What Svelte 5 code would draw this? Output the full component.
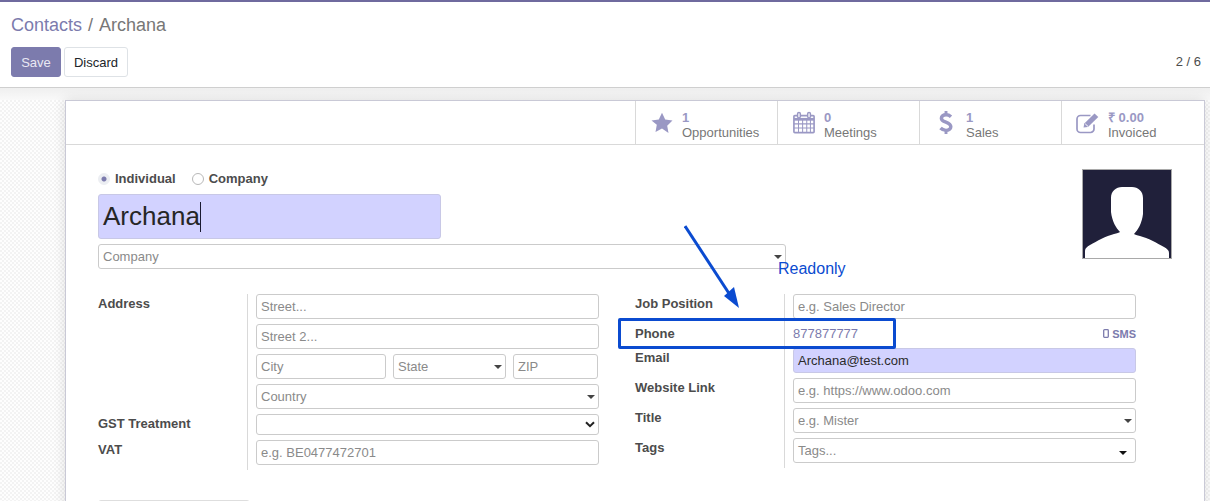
<script>
  const stats = [
    { id: 'star', value: '1', label: 'Opportunities' },
    { id: 'cal', value: '0', label: 'Meetings' },
    { id: 'dollar', value: '1', label: 'Sales' },
    { id: 'edit', value: '₹ 0.00', label: 'Invoiced' }
  ];
</script>

{#snippet field(text, kind = '')}
  <div class="field {kind}">
    <span>{text}</span>
    {#if kind.includes('drop')}<i class="caret"></i>{/if}
  </div>
{/snippet}

<div class="page">
  <header class="panel">
    <nav class="crumbs"><span class="link">Contacts</span><span class="sep">/</span><span>Archana</span></nav>
    <div class="actions">
      <div class="buttons">
        <button class="btn primary">Save</button>
        <button class="btn">Discard</button>
      </div>
      <div class="pager">2 / 6</div>
    </div>
  </header>

  <main class="canvas">
    <section class="sheet">
      <div class="statbar">
        {#each stats as s}
          <div class="stat">
            <div class="icon">
              {#if s.id === 'star'}
                <svg width="22" height="22" viewBox="0 0 22 22"><path d="M11 .8l3.2 6.8 7.3 1-5.3 5.1 1.3 7.4L11 16.6l-6.5 3.5 1.3-7.4L.5 8.6l7.3-1z" fill="#9a98c4"/></svg>
              {:else if s.id === 'cal'}
                <svg width="22" height="23" viewBox="0 0 24 24" fill="none" stroke="#9a98c4"><path d="M2 4.500h20a1 1 0 0 1 1 1V22a1 1 0 0 1-1 1H2a1 1 0 0 1-1-1V5.500a1 1 0 0 1 1-1z" stroke-width="1.800"/><path d="M1 8.500h22" stroke-width="3"/><path d="M1 13.500h22M1 18h22M6 9v14M10.500 9v14M15 9v14M19 9v14" stroke-width="1.100"/><rect x="5" y="1" width="3" height="6" rx="1.500" fill="#fff" stroke-width="1.600"/><rect x="16" y="1" width="3" height="6" rx="1.500" fill="#fff" stroke-width="1.600"/></svg>
              {:else if s.id === 'dollar'}
                <svg width="14" height="25" viewBox="0 0 14 26" fill="none" stroke="#9a98c4"><path d="M12.200 7C10.500 5.500 8.800 5 7 5c-2.800 0-4.800 1.400-4.800 3.500C2.200 13.500 12 11.800 12 17.500c0 2.300-2.200 3.700-5 3.700-2 0-4-.7-5.700-2.400" stroke-width="3.600"/><path d="M7 1v4M7 21v4" stroke-width="3"/></svg>
              {:else}
                <svg width="24" height="22" viewBox="0 0 24 22" fill="none" stroke="#9a98c4"><path d="M18 12.500V17a3.500 3.500 0 0 1-3.500 3.500H4.500A3.500 3.500 0 0 1 1 17V7a3.500 3.500 0 0 1 3.500-3.500h10" stroke-width="1.700"/><path d="M7.500 15.500l.8-4L18.500 1.500l3.800 3.500L12 15z" fill="#9a98c4" stroke="none"/><path d="M9.200 11.800l3 2.800" stroke="#fff"/></svg>
              {/if}
            </div>
            <div class="stat-text"><b>{s.value}</b><span>{s.label}</span></div>
          </div>
        {/each}
      </div>

      <div class="body">
        <div class="top">
          <div class="title">
            <div class="radios">
              <label class="radio"><i class="dot on"></i>Individual</label>
              <label class="radio"><i class="dot"></i>Company</label>
            </div>
            <div class="name"><span>Archana</span><i class="cursor"></i></div>
            {@render field('Company', 'drop')}
          </div>
          <div class="avatar">
            <svg width="88" height="88" viewBox="0 0 88 88">
              <rect width="88" height="88" fill="#20203a"/>
              <path d="M2 88v-7c0-3 2-4 5-6 7-4 16-9 24-11 3-1 5-1 6-2-4-4-8-11-9-20V28c0-7 5-11 11-11h10c6 0 11 4 11 11v16c-1 9-5 16-9 20 1 1 3 1 6 2 8 2 17 7 24 11 3 2 5 3 5 6V88z" fill="#fff"/>
            </svg>
          </div>
        </div>

        <div class="groups">
          <div class="group">
            <div class="lab">Address</div>
            <div class="val stack">
              {@render field('Street...')}
              {@render field('Street 2...')}
              <div class="city">
                <div class="c1">{@render field('City')}</div>
                <div class="c2">{@render field('State', 'drop')}</div>
                <div class="c3">{@render field('ZIP')}</div>
              </div>
              {@render field('Country', 'drop')}
            </div>
            <div class="lab">GST Treatment</div>
            <div class="val">
              <div class="field native">
                <svg class="chev" width="10" height="7" viewBox="0 0 10 7" fill="none" stroke="#222" stroke-width="2"><path d="M1 1.200l4 4 4-4"/></svg>
              </div>
            </div>
            <div class="lab">VAT</div>
            <div class="val">{@render field('e.g. BE0477472701')}</div>
          </div>

          <div class="group">
            <div class="lab">Job Position</div>
            <div class="val">{@render field('e.g. Sales Director')}</div>
            <div class="lab">Phone</div>
            <div class="val phone">
              <span class="num">877877777</span>
              <span class="sms">
                <svg width="6" height="9" viewBox="0 0 6 9" fill="none" stroke="#7c7bad" stroke-width="1.300"><rect x=".7" y=".7" width="4.600" height="7.600" rx=".8"/></svg>SMS
              </span>
            </div>
            <div class="lab">Email</div>
            <div class="val">{@render field('Archana@test.com', 'req')}</div>
            <div class="lab">Website Link</div>
            <div class="val">{@render field('e.g. https://www.odoo.com')}</div>
            <div class="lab">Title</div>
            <div class="val">{@render field('e.g. Mister', 'drop')}</div>
            <div class="lab">Tags</div>
            <div class="val">{@render field('Tags...', 'drop tags')}</div>
          </div>
        </div>

        <div class="notebook"></div>
      </div>
    </section>
  </main>

  <div class="note-box"></div>
  <div class="note-text">Readonly</div>
  <svg class="note-arrow" width="70" height="90" viewBox="0 0 70 90">
    <path d="M1 1L48 73" stroke="#0b4bd0" stroke-width="3" fill="none"/>
    <path d="M40 71L55 83 50 62z" fill="#0b4bd0"/>
  </svg>
</div>

<style>
  :global(body) {
    margin: 0;
    background: #fff;
  }
  .page {
    position: relative;
    width: 1210px;
    height: 501px;
    overflow: hidden;
    font-family: "Liberation Sans", Arial, sans-serif;
    font-size: 13px;
    color: #4c4c4c;
    border-top: 2px solid #6f6a9e;
    box-sizing: border-box;
    display: flex;
    flex-direction: column;
  }
  .panel {
    height: 86px;
    box-sizing: border-box;
    padding: 13px 9px 0 11px;
    border-bottom: 1px solid #cfcfcf;
    background: #fff;
    flex: none;
  }
  .crumbs {
    font-size: 18px;
    line-height: 21px;
    color: #777;
    display: flex;
  }
  .crumbs .link { color: #7c7bad; }
  .crumbs .sep { margin: 0 6px; }
  .actions {
    margin-top: 11px;
    display: flex;
    justify-content: space-between;
  }
  .buttons { display: flex; gap: 3px; }
  .btn {
    width: 64px;
    height: 30px;
    padding: 0;
    font: 13px "Liberation Sans", Arial, sans-serif;
    color: #212529;
    background: #fff;
    border: 1px solid #dee2e6;
    border-radius: 3px;
  }
  .btn.primary {
    width: 50px;
    color: #e9e8f3;
    background: #7c7bad;
    border-color: #7c7bad;
  }
  .pager {
    margin-top: 7px;
    line-height: 15px;
    color: #4c4c4c;
  }
  .canvas {
    flex: 1;
    min-height: 0;
    padding: 12px 5px 0 65px;
    background:
      linear-gradient(#efefef, #f9f9f9 12px, rgba(255, 255, 255, 0) 12px),
      repeating-conic-gradient(#f3f3f3 0 25%, #fefefe 0 50%) 0 0 / 4px 4px;
  }
  .sheet {
    height: 420px;
    background: #fff;
    border: 1px solid #c9c9d6;
    box-shadow: 0 0 12px rgba(0, 0, 0, 0.12);
  }
  .statbar {
    display: flex;
    justify-content: flex-end;
    height: 44px;
    box-sizing: border-box;
    border-bottom: 1px solid #d9d9d9;
  }
  .stat {
    width: 142px;
    box-sizing: border-box;
    display: flex;
    border-left: 1px solid #d9d9d9;
  }
  .stat:last-child { width: 143px; }
  .icon {
    width: 46px;
    box-sizing: border-box;
    padding-left: 6px;
    display: flex;
    align-items: center;
    justify-content: center;
    flex: none;
  }
  .stat-text {
    display: flex;
    flex-direction: column;
    padding-top: 9px;
    line-height: 15px;
    color: #777;
  }
  .stat-text b { color: #9a98c4; }
  .body { padding: 24px 32px 0; }
  .top {
    display: flex;
    justify-content: space-between;
    align-items: flex-start;
  }
  .title { width: 688px; }
  .radios {
    display: flex;
    gap: 16px;
    height: 20px;
    padding-top: 2px;
    margin-bottom: 3px;
  }
  .radio {
    display: flex;
    align-items: center;
    height: 15px;
    font-weight: 700;
    gap: 5px;
  }
  .dot {
    width: 10px;
    height: 10px;
    border: 1px solid #b8b8b8;
    border-radius: 50%;
    background: #fff;
  }
  .dot.on {
    border-color: #eceef2;
    background: radial-gradient(circle, #7c7bad 0 2px, #eceef2 3px);
  }
  .name {
    width: 343px;
    height: 45px;
    box-sizing: border-box;
    margin-bottom: 5px;
    padding-left: 4px;
    display: flex;
    align-items: center;
    font-size: 26px;
    color: #262626;
    background: #d2d2ff;
    border: 1px solid #c8c8e6;
    border-radius: 3px;
  }
  .cursor {
    width: 1px;
    height: 30px;
    background: #1a1a30;
  }
  .avatar {
    border: 1px solid #a9a9a9;
    line-height: 0;
  }
  .groups {
    margin-top: 25px;
    display: flex;
    gap: 36px;
  }
  .group {
    display: grid;
    grid-template-columns: 149px 352px;
    width: 501px;
    align-content: start;
  }
  .lab {
    font-weight: 700;
    line-height: 15px;
    padding-top: 2px;
  }
  .val {
    border-left: 1px solid #d9d9d9;
    padding: 0 0 5px 8px;
  }
  .stack {
    display: flex;
    flex-direction: column;
    gap: 5px;
  }
  .city { display: flex; gap: 7px; }
  .c1 { width: 130px; }
  .c2 { width: 113px; }
  .c3 { width: 85px; }
  .field {
    position: relative;
    height: 25px;
    box-sizing: border-box;
    padding-left: 4px;
    display: flex;
    align-items: center;
    color: #8a8a8a;
    background: #fff;
    border: 1px solid #cbcbcb;
    border-radius: 3px;
  }
  .caret {
    position: absolute;
    right: 3px;
    top: 10px;
    border: 4px solid transparent;
    border-top-color: #444;
    border-bottom: 0;
  }
  .tags .caret {
    right: 8px;
    top: 12px;
    border-top-color: #111;
  }
  .req {
    color: #2b2b2b;
    background: #d2d2ff;
    border-color: #c8c8e6;
  }
  .native {
    height: 21px;
    justify-content: flex-end;
    padding-right: 3px;
  }
  .phone {
    height: 24px;
    box-sizing: border-box;
    padding: 0 0 5px 8px;
    display: flex;
    justify-content: space-between;
    align-items: center;
  }
  .num { color: #7c7bad; }
  .sms {
    display: flex;
    align-items: center;
    gap: 3px;
    font-size: 11px;
    font-weight: 700;
    color: #7c7bad;
  }
  .notebook {
    margin-top: 30px;
    width: 152px;
    height: 20px;
    box-sizing: border-box;
    border: 1px solid #dedede;
    border-radius: 3px 3px 0 0;
  }
  .note-box {
    position: absolute;
    left: 618px;
    top: 316px;
    width: 278px;
    height: 31px;
    box-sizing: border-box;
    border: 3px solid #0b4bd0;
    border-radius: 2px;
  }
  .note-text {
    position: absolute;
    left: 778px;
    top: 258px;
    font-size: 16px;
    line-height: 18px;
    color: #0b4bd0;
  }
  .note-arrow {
    position: absolute;
    left: 684px;
    top: 223px;
  }
</style>
